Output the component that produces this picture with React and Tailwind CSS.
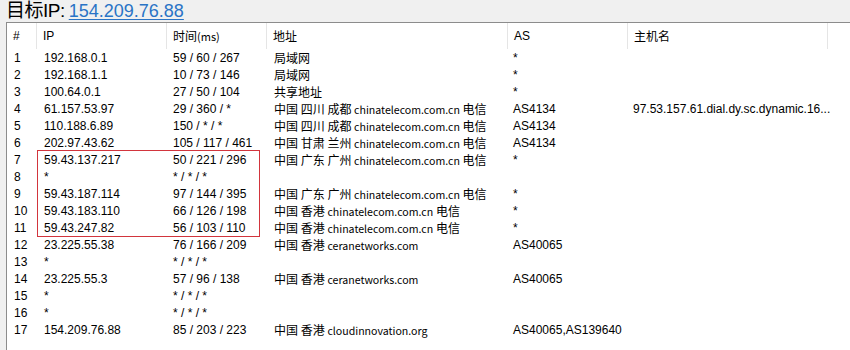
import React from "react";

const hops = [
  { n: 1, ip: "192.168.0.1", time: "59 / 60 / 267", addr: "局域网", as: "*", host: "" },
  { n: 2, ip: "192.168.1.1", time: "10 / 73 / 146", addr: "局域网", as: "*", host: "" },
  { n: 3, ip: "100.64.0.1", time: "27 / 50 / 104", addr: "共享地址", as: "*", host: "" },
  { n: 4, ip: "61.157.53.97", time: "29 / 360 / *", addr: "中国 四川 成都 chinatelecom.com.cn 电信", as: "AS4134", host: "97.53.157.61.dial.dy.sc.dynamic.16..." },
  { n: 5, ip: "110.188.6.89", time: "150 / * / *", addr: "中国 四川 成都 chinatelecom.com.cn 电信", as: "AS4134", host: "" },
  { n: 6, ip: "202.97.43.62", time: "105 / 117 / 461", addr: "中国 甘肃 兰州 chinatelecom.com.cn 电信", as: "AS4134", host: "" },
  { n: 7, ip: "59.43.137.217", time: "50 / 221 / 296", addr: "中国 广东 广州 chinatelecom.com.cn 电信", as: "*", host: "" },
  { n: 8, ip: "*", time: "* / * / *", addr: "", as: "", host: "" },
  { n: 9, ip: "59.43.187.114", time: "97 / 144 / 395", addr: "中国 广东 广州 chinatelecom.com.cn 电信", as: "*", host: "" },
  { n: 10, ip: "59.43.183.110", time: "66 / 126 / 198", addr: "中国 香港 chinatelecom.com.cn 电信", as: "*", host: "" },
  { n: 11, ip: "59.43.247.82", time: "56 / 103 / 110", addr: "中国 香港 chinatelecom.com.cn 电信", as: "*", host: "" },
  { n: 12, ip: "23.225.55.38", time: "76 / 166 / 209", addr: "中国 香港 ceranetworks.com", as: "AS40065", host: "" },
  { n: 13, ip: "*", time: "* / * / *", addr: "", as: "", host: "" },
  { n: 14, ip: "23.225.55.3", time: "57 / 96 / 138", addr: "中国 香港 ceranetworks.com", as: "AS40065", host: "" },
  { n: 15, ip: "*", time: "* / * / *", addr: "", as: "", host: "" },
  { n: 16, ip: "*", time: "* / * / *", addr: "", as: "", host: "" },
  { n: 17, ip: "154.209.76.88", time: "85 / 203 / 223", addr: "中国 香港 cloudinnovation.org", as: "AS40065,AS139640", host: "" },
];

const cols = "grid grid-cols-[30px_130px_100px_241px_120px_200px_1fr]";
const latin = "font-['Liberation_Sans',sans-serif] text-[12px]";
const cjk = "font-['Noto_Sans_CJK_SC',sans-serif] text-[12px]";

// domain names sit a touch smaller than the region names
const Address = ({ text }) =>
  text.split(/([a-z0-9.]+)/).map((part, i) =>
    /^[a-z0-9.]+$/.test(part) ? (
      <span key={i} className="text-[10.6px]">{part}</span>
    ) : (
      <span key={i}>{part}</span>
    )
  );

const HeadCell = ({ children, last }) => (
  <div className={`h-[26px] flex items-center pl-[6px] ${last ? "" : "border-r border-[#e5e5e5]"}`}>
    {children}
  </div>
);

export default function App() {
  return (
    <div className="w-[850px] h-[350px] bg-[#f0f0f0] overflow-hidden text-black">
      {/* target line */}
      <div className="h-[22px] flex items-center pl-[6px] font-['Liberation_Sans','Noto_Sans_CJK_SC',sans-serif] leading-[22px]">
        <span className="text-[19px] tracking-[-0.5px]">目标IP:</span>
        <span className="ml-[4px] text-[18px] text-[#2a74c6] underline underline-offset-[2px]">
          154.209.76.88
        </span>
      </div>

      {/* hop list */}
      <div className="relative ml-[6px] w-[860px] h-[340px] bg-white border border-[#8c8c8c]">
        <div className={`${cols} h-[26px]`}>
          <HeadCell><span className={latin}>#</span></HeadCell>
          <HeadCell><span className={latin}>IP</span></HeadCell>
          <HeadCell>
            <span className={cjk}>时间<span className="text-[11px]">(ms)</span></span>
          </HeadCell>
          <HeadCell><span className={cjk}>地址</span></HeadCell>
          <HeadCell><span className={latin}>AS</span></HeadCell>
          <HeadCell><span className={cjk}>主机名</span></HeadCell>
          <HeadCell last />
        </div>

        {hops.map((h) => (
          <div key={h.n} className={`${cols} h-[17px] items-center`}>
            <div className={`pl-[7px] ${latin}`}>{h.n}</div>
            <div className={`pl-[7px] ${latin}`}>{h.ip}</div>
            <div className={`pl-[6px] ${latin}`}>{h.time}</div>
            <div className={`pl-[7px] ${cjk} whitespace-nowrap`}><Address text={h.addr} /></div>
            <div className={`pl-[5px] ${latin}`}>{h.as}</div>
            <div className={`pl-[5px] ${latin} whitespace-nowrap`}>{h.host}</div>
            <div />
          </div>
        ))}

        {/* highlighted hops */}
        <div className="absolute left-[30px] top-[127px] w-[223px] h-[87px] border border-[#d2353d]" />
      </div>
    </div>
  );
}
